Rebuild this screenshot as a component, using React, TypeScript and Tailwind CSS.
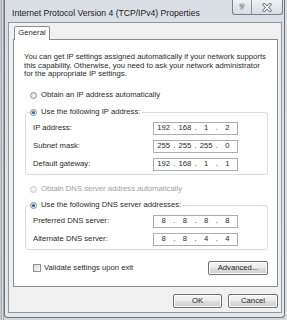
import React from "react";

function Radio({ checked, disabled }: { checked?: boolean; disabled?: boolean }) {
  return (
    <span
      className={
        "w-[7px] h-[7px] rounded-full border flex items-center justify-center shrink-0 " +
        (disabled
          ? "border-[#c4c6c8] bg-[#f3f3f3]"
          : "border-[#8a8c8f] bg-[linear-gradient(135deg,#d6d6d6,#ffffff)]")
      }
    >
      {checked && <span className="w-[3px] h-[3px] rounded-full bg-[#2c5a94]" />}
    </span>
  );
}

function IpBox({ parts }: { parts: string[] }) {
  return (
    <div className="w-[85px] h-[13px] border border-[#abadb3] bg-white flex items-center">
      {parts.map((p, i) => (
        <React.Fragment key={i}>
          {i > 0 && <span className="w-[2px] text-center">.</span>}
          <span className="flex-1 text-center">{p}</span>
        </React.Fragment>
      ))}
    </div>
  );
}

function Field({ label, parts }: { label: string; parts: string[] }) {
  return (
    <div className="h-[18px] flex items-center pl-[7px] pr-[29px]">
      <span className="flex-1 whitespace-nowrap">{label}</span>
      <IpBox parts={parts} />
    </div>
  );
}

function WinButton({ children, w }: { children: React.ReactNode; w: string }) {
  return (
    <div
      className={
        w +
        " h-[14px] rounded-[2px] border border-[#707070] flex items-center justify-center text-[#1e1e1e] bg-[linear-gradient(#f4f4f4,#ebebeb_50%,#dedede_50%,#d0d0d0)] shadow-[inset_0_0_0_1px_#fcfcfc]"
      }
    >
      {children}
    </div>
  );
}

export default function App() {
  return (
    <div className="w-[287px] h-[320px] overflow-hidden flex bg-[#d3d6d9] font-['Liberation_Sans',Arial,sans-serif] text-[7.7px] leading-[8.5px] text-[#2a2a2a]">
      {/* background behind the glass */}
      <div className="w-[4px] flex">
        <div className="w-[1px] bg-[#c6c9cc]" />
        <div className="w-[1px] bg-[#a9adb1]" />
        <div className="w-[1px] bg-[#d8dbde]" />
        <div className="w-[1px] bg-[#9ea2a6]" />
      </div>

      {/* window */}
      <div className="w-[281px] h-[318px] border border-t-0 border-[#6f7780] rounded-b-[4px] bg-[linear-gradient(#d9dee4,#e3e7eb)] flex flex-col">
        {/* title bar */}
        <div className="h-[22px] flex items-start">
          <div className="pl-[7px] pt-[8.5px] flex-1 whitespace-nowrap text-[#1a1a1a] text-[8.6px] leading-[9px]">
            Internet Protocol Version 4 (TCP/IPv4) Properties
          </div>
          <div className="flex h-[15px] mr-[1px] border border-t-0 border-[#77828e] rounded-b-[3px] overflow-hidden bg-[linear-gradient(#eef1f4,#d6dce2)]">
            <div className="w-[19px] flex items-center justify-center border-r border-[#8a95a1] text-white font-bold text-[8px] [text-shadow:0_0_1px_#222,0_0_1px_#222,0_0_1px_#222]">
              ?
            </div>
            <div className="w-[30px] flex items-center justify-center">
              <svg width="10" height="9" viewBox="0 0 10 9">
                <path d="M2 1.5 L8 7.5 M8 1.5 L2 7.5" stroke="#5c6670" strokeWidth="3" strokeLinecap="square" />
                <path d="M2 1.5 L8 7.5 M8 1.5 L2 7.5" stroke="#ffffff" strokeWidth="1.4" strokeLinecap="square" />
              </svg>
            </div>
          </div>
        </div>

        {/* dialog body */}
        <div className="ml-[3px] mr-[2px] h-[291px] bg-[#f0f0f0] border border-[#8f979f] flex flex-col pt-[3px] pl-[4px] pr-[3px]">
          <div className="flex pl-[1px]">
            <div className="w-[36px] h-[14px] -mb-[1px] relative z-10 bg-white border border-b-0 border-[#898c95] rounded-t-[2px] flex items-center justify-center">
              General
            </div>
          </div>

          <div className="h-[248px] border border-[#898c95] bg-white flex flex-col pl-[10px] pr-[9px]">
            <div className="mt-[13px] whitespace-nowrap">
              <div>You can get IP settings assigned automatically if your network supports</div>
              <div>this capability. Otherwise, you need to ask your network administrator</div>
              <div>for the appropriate IP settings.</div>
            </div>

            <div className="mt-[10.5px] h-[12px] flex items-center gap-[4px] pl-[6px]">
              <Radio />
              <span>Obtain an IP address automatically</span>
            </div>

            <fieldset className="mt-[5px] ml-[1px] border border-[#d5dfe5] rounded-[3px] pb-[1px]">
              <legend className="ml-[4px] pr-[2px] h-[12px] flex items-center gap-[4px]">
                <Radio checked />
                <span>Use the following IP address:</span>
              </legend>
              <div className="mt-[1px]">
                <Field label="IP address:" parts={["192", "168", "1", "2"]} />
                <Field label="Subnet mask:" parts={["255", "255", "255", "0"]} />
                <Field label="Default gateway:" parts={["192", "168", "1", "1"]} />
              </div>
            </fieldset>

            <div className="mt-[8px] h-[12px] flex items-center gap-[4px] pl-[6px] text-[#a0a0a0]">
              <Radio disabled />
              <span>Obtain DNS server address automatically</span>
            </div>

            <fieldset className="mt-[4px] ml-[1px] border border-[#d5dfe5] rounded-[3px] pb-[1px]">
              <legend className="ml-[4px] pr-[2px] h-[12px] flex items-center gap-[4px]">
                <Radio checked />
                <span>Use the following DNS server addresses:</span>
              </legend>
              <div className="mt-[1px]">
                <Field label="Preferred DNS server:" parts={["8", "8", "8", "8"]} />
                <Field label="Alternate DNS server:" parts={["8", "8", "4", "4"]} />
              </div>
            </fieldset>

            <div className="mt-[11px] h-[14px] flex items-center pl-[9px]">
              <span className="w-[8px] h-[8px] border border-[#8e8f8f] bg-[linear-gradient(135deg,#d9d9d9,#fafafa)] shrink-0" />
              <span className="ml-[3px] flex-1 whitespace-nowrap">Validate settings upon exit</span>
              <WinButton w="w-[60px]">Advanced...</WinButton>
            </div>
          </div>

          <div className="mt-[7px] flex justify-end gap-[6px]">
            <WinButton w="w-[49px]">OK</WinButton>
            <WinButton w="w-[50px]">Cancel</WinButton>
          </div>
        </div>
      </div>

      <div className="w-[2px] bg-[#d9dcdf]" />
    </div>
  );
}
